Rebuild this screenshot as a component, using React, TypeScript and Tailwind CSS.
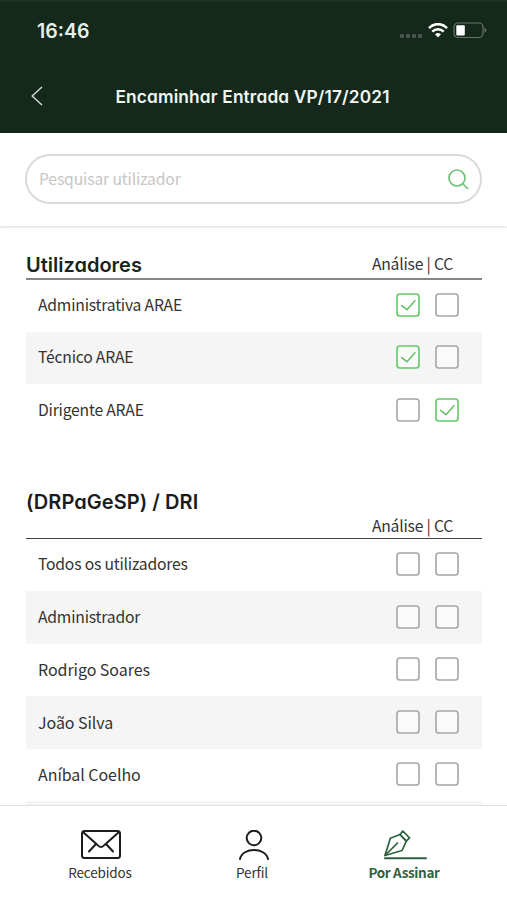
import { useState } from 'react';
import clsx from 'clsx';

type Choice = 'analise' | 'cc' | null;

interface User {
  name: string;
  choice: Choice;
  person?: boolean;
}

const utilizadores: User[] = [
  { name: 'Administrativa ARAE', choice: 'analise' },
  { name: 'Técnico ARAE', choice: 'analise' },
  { name: 'Dirigente ARAE', choice: 'cc' },
];

const dri: User[] = [
  { name: 'Todos os utilizadores', choice: null },
  { name: 'Administrador', choice: null },
  { name: 'Rodrigo Soares', choice: null, person: true },
  { name: 'João Silva', choice: null, person: true },
  { name: 'Aníbal Coelho', choice: null, person: true },
  { name: '', choice: null },
];

function Checkbox({ checked, label, onClick }: { checked: boolean; label: string; onClick: () => void }) {
  return (
    <button type="button" role="checkbox" aria-checked={checked} aria-label={label} onClick={onClick}>
      <svg width="24" height="24" viewBox="0 0 24 24" fill="none" strokeWidth="1.6">
        <rect x="1" y="1" width="22" height="22" rx="2.8" fill="white" fillOpacity="0.5" stroke={checked ? '#62c866' : '#a6a6a6'} />
        {checked && <path d="M5.2 12.2 11 16.7 19.4 7.2" stroke="#66bf69" strokeWidth="1.5" />}
      </svg>
    </button>
  );
}

function UserRow({ user }: { user: User }) {
  const [choice, setChoice] = useState<Choice>(user.choice);
  const toggle = (value: Choice) => setChoice(choice === value ? null : value);

  return (
    <li className="flex h-[52.5px] items-center justify-between pr-[23.5px] pb-[1.3px] pl-3 even:bg-[#f5f5f5]">
      <span className={clsx('leading-6 text-[#333]', user.person ? 'text-[16px] tracking-[-0.05px]' : 'text-[15.7px] tracking-[-0.2px]')}>
        {user.name}
      </span>
      <div className="flex gap-[15px]">
        <Checkbox checked={choice === 'analise'} label="Análise" onClick={() => toggle('analise')} />
        <Checkbox checked={choice === 'cc'} label="CC" onClick={() => toggle('cc')} />
      </div>
    </li>
  );
}

function StatusBar() {
  return (
    <div className="flex h-[60px] items-center justify-between pr-5 pl-[37px]">
      <span className="font-[Inter] text-[19.5px] font-semibold text-[#e6f0e8]">16:46</span>
      <div className="flex items-center">
        <div className="mt-2 mr-1.5 flex gap-[2px]">
          <span className="h-1 w-1 rounded-[1px] bg-[#48564d]" />
          <span className="h-1 w-1 rounded-[1px] bg-[#48564d]" />
          <span className="h-1 w-1 rounded-[1px] bg-[#48564d]" />
          <span className="h-1 w-1 rounded-[1px] bg-[#48564d]" />
        </div>
        <svg className="-mt-1" width="20" height="15" viewBox="0 0 20 15" fill="none" stroke="white" strokeWidth="2.5">
          <path d="M1 5.2C6-.2 14-.2 19 5.2" />
          <path d="M4.3 8.6C7.5 5.3 12.5 5.3 15.7 8.6" />
          <path d="M7 11.3C8.8 9.7 11.2 9.7 13 11.3L10 14.5Z" fill="white" stroke="none" />
        </svg>
        <svg className="-mt-1 ml-[5px]" width="34" height="17" viewBox="0 0 34 17" fill="none">
          <rect x="1" y="1" width="29" height="14.5" rx="4" stroke="#66746a" strokeWidth="1.2" />
          <rect x="3.3" y="3.2" width="8.5" height="10.2" rx="1" fill="white" />
          <path d="M31.5 5.8C34 6.7 34 9.8 31.5 10.7Z" fill="#66746a" />
        </svg>
      </div>
    </div>
  );
}

export default function App() {
  return (
    <div className="flex h-[900px] w-[507px] flex-col overflow-hidden bg-white font-['Noto_Sans_CJK_SC','Noto_Sans',sans-serif]">
      {/* Header */}
      <header className="h-[132.5px] shrink-0 border-t-2 border-[#1c3024] bg-[#15281c]">
        <StatusBar />
        <div className="flex h-[68px] items-center pl-[31px]">
          <button type="button" aria-label="Voltar">
            <svg width="12" height="20" viewBox="0 0 12 20" fill="none" stroke="#d5ddd7" strokeWidth="1.4">
              <path d="M11 1 1.2 10 11 19" />
            </svg>
          </button>
          <h1 className="mt-0.5 ml-[72.5px] font-[Inter] text-[17.3px] font-semibold tracking-[0.15px] whitespace-nowrap text-[#f1f7f2] [font-feature-settings:'cv11']">
            Encaminhar Entrada VP/17/2021
          </h1>
        </div>
      </header>

      {/* Search */}
      <div className="h-[93.5px] shrink-0 px-[25px] pt-[21px] shadow-[0_1px_3px_rgba(0,0,0,0.16)]">
        <div className="flex h-[50px] items-center rounded-full border-2 border-[#dadada] pr-[11px] pl-3">
          <input
            type="text"
            placeholder="Pesquisar utilizador"
            className="min-w-0 flex-1 text-[15.7px] tracking-[-0.15px] outline-none placeholder:text-[#c6c6c6]"
          />
          <svg className="mt-0.5" width="21" height="21" viewBox="0 0 21 21" fill="none" stroke="#72c17a" strokeWidth="1.7">
            <circle cx="9" cy="9" r="8" />
            <path d="M14.5 14.5 20 20" />
          </svg>
        </div>
      </div>

      {/* Lists */}
      <main className="min-h-0 flex-1 overflow-hidden pt-[26px] pr-[25px] pl-[26px]">
        <section>
          <div className="flex h-[28px] items-center justify-between border-b-2 border-[#858585] pr-[29px]">
            <h2 className="font-[Inter] text-[20px] font-semibold text-[#17251c] [font-feature-settings:'cv11']">Utilizadores</h2>
            <span className="-mt-0.5 text-[15.7px] leading-6 tracking-[-0.2px] text-[#333]">Análise | CC</span>
          </div>
          <ul className="-mt-px">
            {utilizadores.map((user) => (
              <UserRow key={user.name} user={user} />
            ))}
          </ul>
        </section>

        <section className="mt-[52px]">
          <h2 className="font-[Inter] text-[20px] leading-[26px] font-semibold tracking-[0.06px] text-[#1b1b1b] [font-feature-settings:'cv11']">
            (DRPaGeSP) / DRI
          </h2>
          <div className="flex h-6 items-center justify-end border-b border-[#444] pr-[29px]">
            <span className="text-[15.7px] leading-6 tracking-[-0.2px] text-[#333]">Análise | CC</span>
          </div>
          <ul>
            {dri.map((user) => (
              <UserRow key={user.name} user={user} />
            ))}
          </ul>
        </section>
      </main>

      {/* Tabs */}
      <nav className="grid h-[95px] shrink-0 grid-cols-[152px_152px_152px] border-t border-[#e2e2e2] bg-white pt-6 pl-6 text-[13.5px] leading-5 tracking-[-0.15px] text-[#333]">
        <a href="#recebidos" className="flex flex-col items-center">
          <svg className="ml-0.5" width="40" height="30" viewBox="0 0 40 30" fill="none" stroke="#1c1c1c" strokeWidth="2" strokeLinejoin="round" strokeLinecap="round">
            <rect x="1" y="1" width="38" height="27" rx="2.5" />
            <path d="M2 2 16.5 15C18.7 17.8 21.3 17.8 23.5 15L38 2M14.5 14.5 8 21.5M25.5 14.5 32 21.5" />
          </svg>
          <span className="mt-[2px]">Recebidos</span>
        </a>
        <a href="#perfil" className="flex flex-col items-center">
          <svg className="ml-1" width="30" height="30" viewBox="0 0 30 30" fill="none" stroke="#1c1c1c" strokeWidth="2" strokeLinecap="round">
            <circle cx="15" cy="8" r="7.3" />
            <path d="M1 29C3.4 17 26.6 17 29 29" />
          </svg>
          <span className="mt-[2px]">Perfil</span>
        </a>
        <a href="#assinar" className="flex flex-col items-center font-bold tracking-[-0.35px] text-[#315f42]">
          <svg className="ml-0.5" width="43" height="30" viewBox="0 0 43 30" fill="none" stroke="#2c633e" strokeWidth="1.7" strokeLinejoin="round" strokeLinecap="round">
            <path d="M1 28.3H42" strokeWidth="2" />
            <path d="M1 25.5 6.3 8.2 16 4.5 22.3 11.2 18 20.5Z" />
            <path d="M1 25.5 13.5 13" />
            <path d="M16 4.5 18.8 1 25.5 7.8 22.3 11.2Z" />
          </svg>
          <span className="mt-[2px]">Por Assinar</span>
        </a>
      </nav>
    </div>
  );
}
